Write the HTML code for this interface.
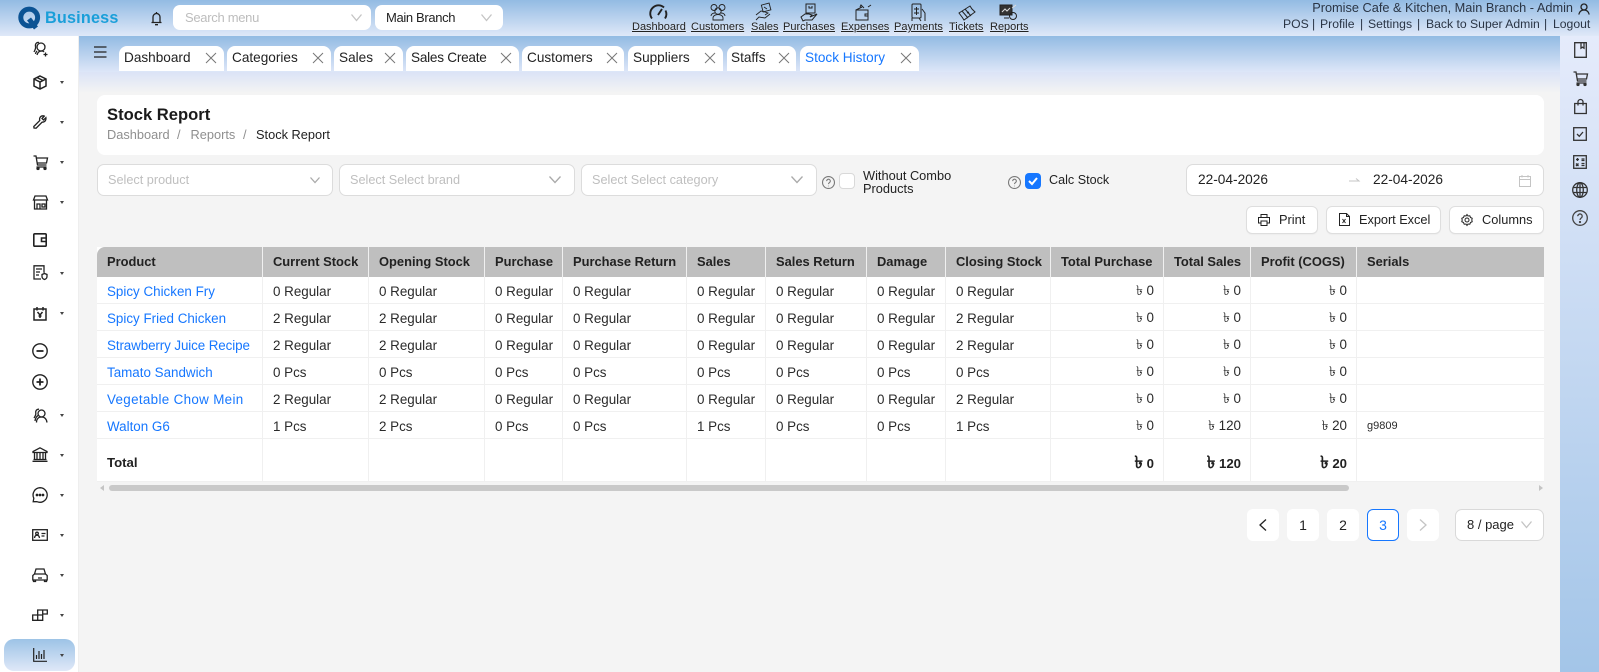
<!DOCTYPE html>
<html lang="en"><head><meta charset="utf-8"><title>Stock Report</title>
<style>
*{box-sizing:border-box}
html,body{margin:0;padding:0}
body{width:1599px;height:672px;overflow:hidden;position:relative;background:#f4f4f4;font-family:"Liberation Sans",sans-serif;color:#1f1f1f;font-size:14px}
.a{position:absolute;white-space:nowrap}
svg{position:absolute;fill:none;stroke:#222;stroke-width:1.3;overflow:visible}
.hd{left:0;top:0;width:1599px;height:36px;background:linear-gradient(#93bbe3,#dfe8f8)}
.side{left:0;top:36px;width:79px;height:636px;background:#fff;border-right:1px solid #eee}
.tabbar{left:79px;top:36px;width:1481px;height:36px;background:linear-gradient(#93bbe3,#dde6f8)}
.tabshadow{left:79px;top:72px;width:1481px;height:21px;background:linear-gradient(#dbe3f6,#f4f4f4)}
.rbar{left:1560px;top:36px;width:39px;height:636px;background:linear-gradient(#e5ebfb,#a3c5e8)}
.sel{background:#fff;border-radius:7px;height:25px}
.tab{top:46px;height:25px;background:#fff;border-radius:8px 8px 0 0;font-size:13.6px;line-height:24px;padding-left:5px;color:#222}
.x{top:52px;width:12px;height:12px}
.nav{top:20px;font-size:11px;line-height:14px;text-decoration:underline;color:#222;text-shadow:0 1px 1px rgba(255,255,255,.4)}
.tr{top:16px;font-size:12.2px;line-height:16px;color:#2a3545}
.card{left:97px;top:95px;width:1447px;height:60px;background:#fff;border-radius:8px}
.f{top:164px;height:32px;background:#fff;border:1px solid #dcdcdc;border-radius:7px;color:#bfbfbf;font-size:12.7px;line-height:30px;padding-left:10px}
.btn{top:206px;height:28px;background:#fff;border:1px solid #dedede;border-radius:6px;font-size:12.8px;line-height:26px;color:#222;box-shadow:0 1px 1px rgba(0,0,0,.03)}
table{position:absolute;left:97px;top:247px;width:1447px;border-collapse:separate;border-spacing:0;table-layout:fixed;background:#fff;font-size:13.4px}
th{height:30px;background:#bfbfbf;text-align:left;font-weight:bold;font-size:12.9px;padding:0 0 1px 10px;border-right:1px solid #f0f0f0;color:#222;white-space:nowrap;overflow:hidden}
th:first-child{border-top-left-radius:8px}th:last-child{border-top-right-radius:0;border-right:0}
td{height:27px;padding:2px 0 0 10px;border-right:1px solid #f0f0f0;border-bottom:1px solid #f0f0f0;white-space:nowrap;overflow:hidden;color:#2a2a2a}
td:last-child{border-right:0;font-size:11px}
td.r{text-align:right;padding:4px 9px 0 0}
td a{color:#1677ff;font-size:13.4px;text-decoration:none}
tr.t td{height:43px;font-weight:bold;font-size:13.2px;color:#222;padding-top:4px}
tr.t td.r{padding-top:6px}
tr.t td span{font-size:17px;line-height:14px}
.pg{top:509px;width:32px;height:32px;background:#fff;border-radius:6px;text-align:center;line-height:32px;font-size:14px;color:#222}
.caret{width:0;height:0;border-left:2.5px solid transparent;border-right:2.5px solid transparent;border-top:3px solid #444;left:60px}
</style></head><body>
<div class="a hd"></div><div class="a side"></div><div class="a tabbar"></div><div class="a tabshadow"></div><div class="a rbar"></div>

<!-- logo -->
<svg style="left:18px;top:6px;width:24px;height:24px" viewBox="0 0 24 24"><circle cx="11.2" cy="11.5" r="8.4" stroke="#0b5394" stroke-width="5"/><path d="M11 13l7 9" stroke="#0b5394" stroke-width="5"/></svg>
<div class="a" style="left:45px;top:8px;font-size:16.2px;line-height:20px;font-weight:bold;color:#1a9fd9;letter-spacing:.2px">Business</div>
<!-- bell -->
<svg style="left:150px;top:11px;width:13px;height:15px" viewBox="0 0 13 15"><path d="M1.5 11.5h10M3 11.500V6a3.500 3.500 0 0 1 7 0v5.500M5 13.700h3M6.500 1v1.200"/></svg>
<div class="a sel" style="left:173px;top:5px;width:198px;color:#bdbdbd;font-size:13px;letter-spacing:-.3px;line-height:25px;padding-left:12px">Search menu</div>
<svg style="left:351px;top:14px;width:11px;height:7px;stroke:#c4c4c4" viewBox="0 0 11 7"><path d="M.5.5l5 6 5-6"/></svg>
<div class="a sel" style="left:375px;top:5px;width:128px;font-size:13px;letter-spacing:-.35px;line-height:25px;padding-left:11px;color:#222">Main Branch</div>
<svg style="left:481px;top:14px;width:11px;height:7px;stroke:#c4c4c4" viewBox="0 0 11 7"><path d="M.5.5l5 6 5-6"/></svg>

<!-- top nav -->
<svg style="left:649px;top:4px;width:19px;height:16px;stroke-width:1.9" viewBox="0 0 19 16"><path d="M3 14.500A8 8 0 0 1 4 3.500 8 8 0 0 1 15 3.500M16.500 6.500a8 8 0 0 1-.5 8M9 11l4-6"/></svg>
<svg style="left:708px;top:3px;width:20px;height:18px;stroke-width:.9" viewBox="0 0 20 18"><circle cx="6" cy="4.500" r="3"/><circle cx="14" cy="4.500" r="3"/><circle cx="10" cy="8" r="3.200"/><path d="M3 13c0-2 2-3 4-3M17 13c0-2-2-3-4-3M5 17v-2c0-2 2-3.500 5-3.500s5 1.500 5 3.500v2z"/></svg>
<svg style="left:755px;top:3px;width:17px;height:18px;stroke-width:.9" viewBox="0 0 17 18"><rect x="7" y="1" width="8" height="7" transform="rotate(-15 11 4)"/><path d="M1 12l5-4 4 1 3 1-3 2M1 17l3-3 6 1 5-4M9 4l3 2"/></svg>
<svg style="left:800px;top:3px;width:19px;height:18px;stroke-width:1" viewBox="0 0 19 18"><path d="M6 1h9v9H6zM9 3v2h3V3M1 14l4-3h4l3 1-2 2 7-3-5 6H5l-2 1z"/></svg>
<svg style="left:855px;top:4px;width:18px;height:17px;stroke-width:1" viewBox="0 0 18 17"><path d="M1 6h12v10H1zM1 6l6-3M5 3l1-2 3 3M13 10h-3v2h3M13 3l3-2"/></svg>
<svg style="left:909px;top:3px;width:18px;height:19px;stroke-width:1" viewBox="0 0 18 19"><rect x="3" y="1" width="9" height="14" rx="1"/><path d="M7.500 4v8M5 6h5M5 10h5M13 6l3 4v8M3 18v-3M10 15l2 3"/></svg>
<svg style="left:958px;top:4px;width:18px;height:17px;stroke-width:1" viewBox="0 0 18 17"><path d="M1 9l11-7 2 3 3 3-11 8-2-3zM4 7l6 7M7 5l6 7M9 9l2-1"/></svg>
<svg style="left:999px;top:3px;width:19px;height:18px;stroke-width:1" viewBox="0 0 19 18"><rect x="1" y="2" width="12" height="10" fill="#333"/><path d="M3 9l3-3 2 2 3-3M13 5l4-3" stroke="#ddd"/><circle cx="14" cy="13" r="3.500"/><path d="M5 15h5"/></svg>
<div class="a nav" style="left:632px">Dashboard</div>
<div class="a nav" style="left:691px">Customers</div>
<div class="a nav" style="left:751px">Sales</div>
<div class="a nav" style="left:783px">Purchases</div>
<div class="a nav" style="left:841px">Expenses</div>
<div class="a nav" style="left:894px">Payments</div>
<div class="a nav" style="left:949px">Tickets</div>
<div class="a nav" style="left:990px">Reports</div>

<!-- top right -->
<div class="a" style="right:26px;top:0;font-size:12.75px;line-height:16px;color:#2a3545">Promise Cafe &amp; Kitchen, Main Branch - Admin</div>
<svg style="left:1578px;top:3px;width:12px;height:12px" viewBox="0 0 12 12"><circle cx="6" cy="4" r="3"/><path d="M.8 11.500C1.500 8.500 3.500 7 6 7s4.500 1.500 5.200 4.500"/></svg>
<div class="a tr" style="left:1283px">POS</div><div class="a tr" style="left:1312px">|</div>
<div class="a tr" style="left:1320px">Profile</div><div class="a tr" style="left:1360px">|</div>
<div class="a tr" style="left:1368px">Settings</div><div class="a tr" style="left:1417px">|</div>
<div class="a tr" style="left:1426px">Back to Super Admin</div><div class="a tr" style="left:1544px">|</div>
<div class="a tr" style="left:1553px">Logout</div>

<!-- hamburger -->
<svg style="left:94px;top:46px;width:13px;height:12px" viewBox="0 0 13 12"><path d="M0 1h12.500M0 6h12.500M0 11h12.500"/></svg>

<!-- tabs -->
<div class="a tab" style="left:119px;width:105px">Dashboard</div>
<div class="a tab" style="left:227px;width:104px">Categories</div>
<div class="a tab" style="left:334px;width:69px">Sales</div>
<div class="a tab" style="left:406px;width:113px;letter-spacing:-.25px">Sales Create</div>
<div class="a tab" style="left:522px;width:102px">Customers</div>
<div class="a tab" style="left:628px;width:95px">Suppliers</div>
<div class="a tab" style="left:727px;width:69px;padding-left:4px">Staffs</div>
<div class="a tab" style="left:800px;width:119px;color:#1677ff">Stock History</div>
<svg class="a x" style="left:205px;stroke:#777;stroke-width:1" viewBox="0 0 12 12"><path d="M1 1l10 10M11 1L1 11"/></svg>
<svg class="a x" style="left:312px;stroke:#777;stroke-width:1" viewBox="0 0 12 12"><path d="M1 1l10 10M11 1L1 11"/></svg>
<svg class="a x" style="left:384px;stroke:#777;stroke-width:1" viewBox="0 0 12 12"><path d="M1 1l10 10M11 1L1 11"/></svg>
<svg class="a x" style="left:500px;stroke:#777;stroke-width:1" viewBox="0 0 12 12"><path d="M1 1l10 10M11 1L1 11"/></svg>
<svg class="a x" style="left:606px;stroke:#777;stroke-width:1" viewBox="0 0 12 12"><path d="M1 1l10 10M11 1L1 11"/></svg>
<svg class="a x" style="left:704px;stroke:#777;stroke-width:1" viewBox="0 0 12 12"><path d="M1 1l10 10M11 1L1 11"/></svg>
<svg class="a x" style="left:778px;stroke:#777;stroke-width:1" viewBox="0 0 12 12"><path d="M1 1l10 10M11 1L1 11"/></svg>
<svg class="a x" style="left:900px;stroke:#777;stroke-width:1" viewBox="0 0 12 12"><path d="M1 1l10 10M11 1L1 11"/></svg>

<!-- sidebar -->
<div class="a" style="left:4px;top:639px;width:71px;height:32px;border-radius:10px;background:linear-gradient(#9dc3e6,#dfe8f8)"></div>
<svg style="left:33px;top:41px;width:15px;height:16px" viewBox="0 0 15 16"><circle cx="8" cy="6" r="4"/><path d="M6 1.500C3.500 1 2 3 2.500 5.500 3 7.500 2 9 1 11M4 10c-1 1-1.500 2-1.500 3M4 14c.5-2 2-4 4.500-4 1 0 2 .3 2.500 1M12.500 11.500v4M10.500 13.500h4"/></svg>
<svg style="left:33px;top:75px;width:14px;height:15px;stroke-width:1.500" viewBox="0 0 14 15"><path d="M7 1l6 3v7l-6 3-6-3V4zM1 4l6 3 6-3M7 7v7M4 2.500l6 3"/></svg>
<svg style="left:33px;top:115px;width:14px;height:14px" viewBox="0 0 14 14"><path d="M1 13l-.2-1.500 6-6C6 3 7.500.8 10 .8c.5 0 1 .1 1.300.3L9 3.500 10.500 5l2.400-2.300c.3 1.800-.5 4.500-3.800 4.500l-6 6z"/></svg>
<svg style="left:33px;top:155px;width:15px;height:15px" viewBox="0 0 15 15"><path d="M.5 1h2.500l1.500 9h9M3.500 3h11l-1 5h-9.500M3.500 12h10"/><circle cx="5" cy="13.500" r="1" fill="#222"/><circle cx="12" cy="13.500" r="1" fill="#222"/></svg>
<svg style="left:33px;top:195px;width:15px;height:15px" viewBox="0 0 15 15"><path d="M2 1h11l1.500 4h-14zM1.500 5v9h12V5M4 14V9h3v5M9 9h3v3H9z"/></svg>
<svg style="left:33px;top:233px;width:14px;height:14px;stroke-width:1.600" viewBox="0 0 14 14"><rect x=".8" y=".8" width="12.400" height="12.400" rx="1"/><path d="M13 5H8.500v3.500H13"/></svg>
<svg style="left:33px;top:265px;width:15px;height:15px" viewBox="0 0 15 15"><path d="M8 14H1V.8h10v7M3 4h6M3 7h4M3 10h3M9 9.500l2.500-1 2.500 1v2c0 1.500-1 2.500-2.500 3-1.500-.5-2.500-1.500-2.500-3z"/></svg>
<svg style="left:33px;top:306px;width:14px;height:15px;stroke-width:1.500" viewBox="0 0 14 15"><path d="M1 3h12v11H1zM4 1v3.500M10 1v3.500M4.500 6L7 9l2.500-3M7 9v3M5.500 10h3"/></svg>
<svg style="left:32px;top:343px;width:16px;height:16px;stroke-width:1.400" viewBox="0 0 16 16"><circle cx="8" cy="8" r="7.200"/><path d="M4.500 8h7" stroke-width="1.800"/></svg>
<svg style="left:32px;top:374px;width:16px;height:16px;stroke-width:1.400" viewBox="0 0 16 16"><circle cx="8" cy="8" r="7.200"/><path d="M4.500 8h7M8 4.500v7" stroke-width="1.800"/></svg>
<svg style="left:33px;top:408px;width:15px;height:15px" viewBox="0 0 15 15"><circle cx="8.500" cy="5.500" r="3.500"/><path d="M6 1.200C3.500 1 2.300 3 2.800 5.300 3 7 2 8.500 1 10M2 13c.3-3 2-5 3-5.500M3.500 14.500c0-3.500 2-5.500 5-5.500s5 2 5.500 5.500"/></svg>
<svg style="left:32px;top:447px;width:16px;height:15px" viewBox="0 0 16 15"><path d="M8 .8L1 4.500v1h14v-1zM2.500 5.500v6.500M5 5.500v6.500M8 5.500v6.500M11 5.500v6.500M13.500 5.500v6.500M1.500 12.500h13M.5 14.300h15"/></svg>
<svg style="left:32px;top:487px;width:16px;height:16px;stroke-width:1.300" viewBox="0 0 16 16"><path d="M8 .7a7.300 7.300 0 1 1-3 14H1.200l.6-3.500A7.300 7.300 0 0 1 8 .7z"/><circle cx="5" cy="8" r=".7" fill="#222"/><circle cx="8" cy="8" r=".7" fill="#222"/><circle cx="11" cy="8" r=".7" fill="#222"/></svg>
<svg style="left:32px;top:529px;width:16px;height:12px;stroke-width:1.300" viewBox="0 0 16 12"><rect x=".7" y=".7" width="14.600" height="10.600"/><circle cx="5" cy="4.500" r="1.300"/><path d="M2.500 9c.3-2 1.200-2.800 2.500-2.800S7.200 7 7.500 9M9.500 4.500h4M9.500 7h3"/></svg>
<svg style="left:32px;top:568px;width:16px;height:14px;stroke-width:1.300" viewBox="0 0 16 14"><path d="M.8 12V7.500L2.500 6 4 1h8l1.500 5 1.700 1.500V12zM2.500 6h11M1.500 12v1.500h2V12M12.500 12v1.500h2V12M6 10h4"/></svg>
<svg style="left:32px;top:609px;width:16px;height:12px;stroke-width:1.300" viewBox="0 0 16 12"><path d="M.7 6h10v5.300H.7zM5.700 6v5.300M5.700 6V1h5v5M10.700 1h4.600v4h-4.600"/></svg>
<svg style="left:33px;top:648px;width:14px;height:14px;stroke-width:1.200" viewBox="0 0 14 14"><path d="M.7 0v13.300H14M3.500 11V7M6 11V3M8.500 11V6M11 11V2"/></svg>
<div class="a caret" style="top:81px"></div><div class="a caret" style="top:121px"></div><div class="a caret" style="top:161px"></div><div class="a caret" style="top:201px"></div><div class="a caret" style="top:272px"></div><div class="a caret" style="top:312px"></div><div class="a caret" style="top:414px"></div><div class="a caret" style="top:454px"></div><div class="a caret" style="top:494px"></div><div class="a caret" style="top:534px"></div><div class="a caret" style="top:574px"></div><div class="a caret" style="top:614px"></div><div class="a caret" style="top:654px"></div>

<!-- right bar -->
<svg style="left:1574px;top:42px;width:13px;height:16px;stroke:#333" viewBox="0 0 13 16"><path d="M.7.7h11.600v14.600H.7zM7 .7v5.500l1.500-1 1.500 1V.7"/></svg>
<svg style="left:1573px;top:71px;width:15px;height:15px;stroke:#333" viewBox="0 0 15 15"><path d="M.5 1h2.500l1.500 9h9M3.500 3h11l-1 5h-9.500M3.500 12h10"/><circle cx="5" cy="13.500" r="1" fill="#333"/><circle cx="12" cy="13.500" r="1" fill="#333"/></svg>
<svg style="left:1574px;top:99px;width:13px;height:15px;stroke:#333" viewBox="0 0 13 15"><path d="M.7 4.500h11.600v10H.7zM4 6.500V3a2.500 2.500 0 0 1 5 0v3.500"/></svg>
<svg style="left:1573px;top:127px;width:14px;height:14px;stroke:#333" viewBox="0 0 14 14"><rect x=".7" y=".7" width="12.600" height="12.600"/><path d="M4 7l2.300 2.300L10 5"/></svg>
<svg style="left:1573px;top:155px;width:14px;height:14px;stroke:#333" viewBox="0 0 14 14"><rect x=".7" y=".7" width="12.600" height="12.600"/><path d="M3 4.500h3M4.500 3v3M8.500 4h3M8.500 5.500h3M3 8.500l2.500 2.500M5.500 8.500L3 11M8.500 8.500h3M8.500 10.500h3"/></svg>
<svg style="left:1572px;top:182px;width:16px;height:16px;stroke:#333" viewBox="0 0 16 16"><circle cx="8" cy="8" r="7.300"/><ellipse cx="8" cy="8" rx="3.300" ry="7.300"/><path d="M1 5.500h14M1 10.500h14M8 .7v14.600"/></svg>
<svg style="left:1572px;top:210px;width:16px;height:16px;stroke:#444" viewBox="0 0 16 16"><circle cx="8" cy="8" r="7.300"/><path d="M5.800 6.200a2.200 2.200 0 1 1 3.400 1.800c-.8.500-1.200 1-1.200 2"/><circle cx="8" cy="12" r=".5" fill="#444"/></svg>

<!-- heading card -->
<div class="a card"></div>
<div class="a" style="left:107px;top:104px;font-size:16.6px;line-height:22px;font-weight:bold;color:#1a1a1a">Stock Report</div>
<div class="a" style="left:107px;top:127px;font-size:12.8px;line-height:16px;color:#8f8f8f">Dashboard</div>
<div class="a" style="left:177px;top:127px;font-size:12.8px;line-height:16px;color:#8f8f8f">/</div>
<div class="a" style="left:190.500px;top:127px;font-size:12.8px;line-height:16px;color:#8f8f8f">Reports</div>
<div class="a" style="left:243px;top:127px;font-size:12.8px;line-height:16px;color:#8f8f8f">/</div>
<div class="a" style="left:256px;top:127px;font-size:12.8px;line-height:16px;color:#222">Stock Report</div>

<!-- filters -->
<div class="a f" style="left:97px;width:236px">Select product</div>
<div class="a f" style="left:339px;width:236px">Select Select brand</div>
<div class="a f" style="left:581px;width:236px">Select Select category</div>
<svg style="left:310px;top:177px;width:10px;height:6px;stroke:#aaa" viewBox="0 0 10 6"><path d="M.5.500L5 5.500 9.500.5"/></svg>
<svg style="left:549px;top:176px;width:12px;height:7px;stroke:#aaa" viewBox="0 0 12 7"><path d="M.5.500L6 6.500 11.500.5"/></svg>
<svg style="left:791px;top:176px;width:12px;height:7px;stroke:#aaa" viewBox="0 0 12 7"><path d="M.5.500L6 6.500 11.500.5"/></svg>
<svg style="left:822px;top:175.500px;width:13px;height:13px;stroke:#777;stroke-width:1" viewBox="0 0 12 12"><circle cx="6" cy="6" r="5.500"/><path d="M4.300 4.700a1.700 1.700 0 1 1 2.600 1.400c-.6.400-.9.700-.9 1.400M6 9v.5"/></svg>
<div class="a" style="left:839px;top:173px;width:16px;height:16px;background:#fff;border:1px solid #d9d9d9;border-radius:4px"></div>
<div class="a" style="left:863px;top:168.500px;font-size:12.8px;line-height:13px;color:#222">Without Combo<br>Products</div>
<svg style="left:1008px;top:175.500px;width:13px;height:13px;stroke:#777;stroke-width:1" viewBox="0 0 12 12"><circle cx="6" cy="6" r="5.500"/><path d="M4.300 4.700a1.700 1.700 0 1 1 2.600 1.400c-.6.400-.9.700-.9 1.400M6 9v.5"/></svg>
<div class="a" style="left:1025px;top:173px;width:16px;height:16px;background:#1677ff;border-radius:4px"></div>
<svg style="left:1028px;top:177px;width:10px;height:8px;stroke:#fff;stroke-width:2" viewBox="0 0 10 8"><path d="M1 4l3 3 5-6"/></svg>
<div class="a" style="left:1049px;top:173px;font-size:12.6px;line-height:15px;color:#222">Calc Stock</div>
<div class="a f" style="left:1186px;width:358px"></div>
<div class="a" style="left:1198px;top:172px;font-size:13.7px;line-height:16px;color:#222">22-04-2026</div>
<div class="a" style="left:1373px;top:172px;font-size:13.7px;line-height:16px;color:#222">22-04-2026</div>
<svg style="left:1349px;top:178px;width:11px;height:5px;stroke:#c4c4c4;stroke-width:1" viewBox="0 0 11 5"><path d="M0 3h10L7 .5"/></svg>
<svg style="left:1519px;top:175px;width:12px;height:12px;stroke:#c4c4c4;stroke-width:1" viewBox="0 0 12 12"><rect x=".5" y="1.500" width="11" height="10"/><path d="M.5 4.500h11M3 0v2.500M9 0v2.500"/></svg>

<!-- buttons -->
<div class="a btn" style="left:1246px;width:72px;padding-left:32px">Print</div>
<div class="a btn" style="left:1326px;width:115px;padding-left:32px;letter-spacing:-.05px">Export Excel</div>
<div class="a btn" style="left:1449px;width:95px;padding-left:32px">Columns</div>
<svg style="left:1258px;top:214px;width:12px;height:12px;stroke-width:1" viewBox="0 0 12 12"><path d="M3 3V.5h6V3M3 9H.5V3.500h11V9H9M3 7h6v4.500H3z"/></svg>
<svg style="left:1339px;top:213px;width:11px;height:13px;stroke-width:1" viewBox="0 0 11 13"><path d="M.5.500h7l3 3v9h-10zM7.500.500v3h3M3.500 6l3 4M6.500 6l-3 4"/></svg>
<svg style="left:1461px;top:214px;width:12px;height:12px;stroke-width:1" viewBox="0 0 12 12"><circle cx="6" cy="6" r="2"/><path d="M6 .5l1 1.500 1.800-.2.700 1.700 1.700.8-.4 1.700.4 1.700-1.700.8-.7 1.700L7 10 6 11.500 5 10l-1.800.2-.7-1.700L.8 7.700 1.200 6 .8 4.300l1.700-.8.7-1.700L5 2z"/></svg>

<!-- table -->
<table>
<colgroup><col style="width:166px"><col style="width:106px"><col style="width:116px"><col style="width:78px"><col style="width:124px"><col style="width:79px"><col style="width:101px"><col style="width:79px"><col style="width:105px"><col style="width:113px"><col style="width:87px"><col style="width:106px"><col></colgroup>
<tr><th>Product</th><th>Current Stock</th><th>Opening Stock</th><th>Purchase</th><th>Purchase Return</th><th>Sales</th><th>Sales Return</th><th>Damage</th><th>Closing Stock</th><th>Total Purchase</th><th>Total Sales</th><th>Profit (COGS)</th><th>Serials</th></tr>
<tr><td><a>Spicy Chicken Fry</a></td><td>0 Regular</td><td>0 Regular</td><td>0 Regular</td><td>0 Regular</td><td>0 Regular</td><td>0 Regular</td><td>0 Regular</td><td>0 Regular</td><td class="r">৳ 0</td><td class="r">৳ 0</td><td class="r">৳ 0</td><td></td></tr>
<tr><td><a>Spicy Fried Chicken</a></td><td>2 Regular</td><td>2 Regular</td><td>0 Regular</td><td>0 Regular</td><td>0 Regular</td><td>0 Regular</td><td>0 Regular</td><td>2 Regular</td><td class="r">৳ 0</td><td class="r">৳ 0</td><td class="r">৳ 0</td><td></td></tr>
<tr><td><a style="letter-spacing:-.1px">Strawberry Juice Recipe</a></td><td>2 Regular</td><td>2 Regular</td><td>0 Regular</td><td>0 Regular</td><td>0 Regular</td><td>0 Regular</td><td>0 Regular</td><td>2 Regular</td><td class="r">৳ 0</td><td class="r">৳ 0</td><td class="r">৳ 0</td><td></td></tr>
<tr><td><a>Tamato Sandwich</a></td><td>0 Pcs</td><td>0 Pcs</td><td>0 Pcs</td><td>0 Pcs</td><td>0 Pcs</td><td>0 Pcs</td><td>0 Pcs</td><td>0 Pcs</td><td class="r">৳ 0</td><td class="r">৳ 0</td><td class="r">৳ 0</td><td></td></tr>
<tr><td><a style="letter-spacing:.33px">Vegetable Chow Mein</a></td><td>2 Regular</td><td>2 Regular</td><td>0 Regular</td><td>0 Regular</td><td>0 Regular</td><td>0 Regular</td><td>0 Regular</td><td>2 Regular</td><td class="r">৳ 0</td><td class="r">৳ 0</td><td class="r">৳ 0</td><td></td></tr>
<tr><td><a>Walton G6</a></td><td>1 Pcs</td><td>2 Pcs</td><td>0 Pcs</td><td>0 Pcs</td><td>1 Pcs</td><td>0 Pcs</td><td>0 Pcs</td><td>1 Pcs</td><td class="r">৳ 0</td><td class="r">৳ 120</td><td class="r">৳ 20</td><td>g9809</td></tr>
<tr class="t"><td>Total</td><td></td><td></td><td></td><td></td><td></td><td></td><td></td><td></td><td class="r"><span>৳</span> 0</td><td class="r"><span>৳</span> 120</td><td class="r"><span>৳</span> 20</td><td></td></tr>
</table>
<!-- scrollbar -->
<div class="a" style="left:109px;top:485px;width:1240px;height:6px;background:#c9c9c9;border-radius:3px"></div>
<div class="a" style="left:100px;top:485px;width:0;height:0;border-top:3px solid transparent;border-bottom:3px solid transparent;border-right:4px solid #c4c4c4"></div>
<div class="a" style="left:1539px;top:485px;width:0;height:0;border-top:3px solid transparent;border-bottom:3px solid transparent;border-left:4px solid #c4c4c4"></div>

<!-- pagination -->
<div class="a pg" style="left:1247px"></div>
<svg style="left:1259px;top:519px;width:8px;height:12px;stroke-width:1.300" viewBox="0 0 8 12"><path d="M7 .5L1 6l6 5.500"/></svg>
<div class="a pg" style="left:1287px">1</div>
<div class="a pg" style="left:1327px">2</div>
<div class="a pg" style="left:1367px;border:1px solid #1677ff;color:#1677ff;line-height:30px">3</div>
<div class="a pg" style="left:1407px"></div>
<svg style="left:1419px;top:519px;width:8px;height:12px;stroke:#c4c4c4;stroke-width:1.300" viewBox="0 0 8 12"><path d="M1 .5L7 6l-6 5.500"/></svg>
<div class="a" style="left:1455px;top:509px;width:89px;height:32px;background:#fff;border:1px solid #d9d9d9;border-radius:7px;font-size:13px;line-height:30px;padding-left:11px;color:#222">8 / page</div>
<svg style="left:1521px;top:521px;width:11px;height:7px;stroke:#c4c4c4" viewBox="0 0 11 7"><path d="M.5.500l5 6 5-6"/></svg>
</body></html>
